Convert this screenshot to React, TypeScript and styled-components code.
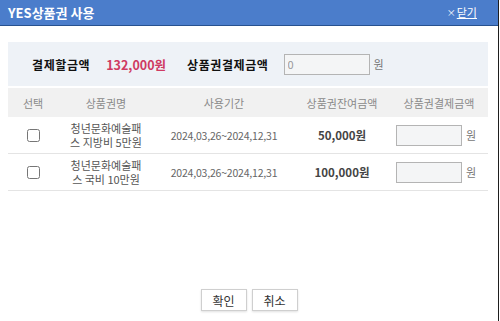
import React from "react";
import styled, { createGlobalStyle } from "styled-components";

const GlobalStyle = createGlobalStyle`
  html, body {
    margin: 0;
    padding: 0;
    background: #ffffff;
  }
  body {
    font-family: "Noto Sans CJK KR", "Noto Sans", sans-serif;
  }
`;

type Voucher = {
  id: number;
  name: string;
  period: string;
  balance: string;
};

const vouchers: Voucher[] = [
  { id: 1, name: "청년문화예술패스 지방비 5만원", period: "2024,03,26~2024,12,31", balance: "50,000원" },
  { id: 2, name: "청년문화예술패스 국비 10만원", period: "2024,03,26~2024,12,31", balance: "100,000원" },
];

const Dialog = styled.div`
  width: 499px;
  height: 321px;
  box-sizing: border-box;
  border-right: 1px solid #1e1e1e;
  display: flex;
  flex-direction: column;
  background: #ffffff;
`;

const TitleBar = styled.div`
  height: 26px;
  box-sizing: border-box;
  background: #4b7dcb;
  border-bottom: 1px solid #27518f;
  display: flex;
  align-items: center;
  justify-content: space-between;
  padding: 0 21px 1px 8px;
`;

const Title = styled.h1`
  margin: 0;
  font-size: 13px;
  font-weight: 700;
  color: #ffffff;
`;

const CloseLink = styled.a`
  font-size: 11px;
  color: #ffffff;
  cursor: pointer;
  display: flex;
  align-items: center;

  i {
    font-style: normal;
    font-size: 9px;
    margin-right: 1px;
  }

  span {
    text-decoration: underline;
  }
`;

const Body = styled.div`
  flex: 1;
  padding: 16px 10px 0 8px;
`;

const Summary = styled.div`
  height: 44px;
  background: #eef2f7;
  display: flex;
  align-items: center;
  padding-left: 24px;
  font-size: 12px;
  color: #111;
`;

const SummaryLabel = styled.span<{ gap: number }>`
  font-weight: 700;
  letter-spacing: 0.6px;
  margin-right: ${(p) => p.gap}px;
`;

const Price = styled.span`
  font-weight: 700;
  color: #cf3a62;
  margin-right: 21px;
  font-size: 12.5px;
`;

const AmountInput = styled.input<{ w: number; h: number }>`
  width: ${(p) => p.w}px;
  height: ${(p) => p.h}px;
  box-sizing: border-box;
  border: 1px solid #b4b4b4;
  background: #f4f5f6;
  padding: 0 3px;
  font-size: 11px;
  color: #999;
  font-family: inherit;
`;

const Won = styled.span`
  font-size: 11px;
  color: #777;
  margin-left: 4px;
`;

const Row = styled.div<{ head?: boolean }>`
  display: grid;
  grid-template-columns: 50px 96px 140px 96px 98px;
  align-items: center;
  height: ${(p) => (p.head ? "29px" : "36px")};
  margin-top: ${(p) => (p.head ? "2px" : "0")};
  background: ${(p) => (p.head ? "#f1f1f1" : "#ffffff")};
  border-bottom: ${(p) => (p.head ? "none" : "1px solid #e4e4e4")};
  color: ${(p) => (p.head ? "#8a8a8a" : "#555")};
  font-size: 11px;
`;

const Cell = styled.div<{ pr?: number }>`
  display: flex;
  justify-content: center;
  align-items: center;
  text-align: center;
  padding-right: ${(p) => p.pr ?? 0}px;
`;

const Check = styled.input`
  width: 13px;
  height: 13px;
  margin: 0;
`;

const Name = styled.div`
  width: 80px;
  line-height: 14px;
  word-break: break-all;
  font-size: 11px;
  color: #555;
`;

const Period = styled.span`
  font-size: 10.5px;
  color: #666;
  letter-spacing: -0.2px;
`;

const Balance = styled.span`
  font-weight: 700;
  font-size: 11.5px;
  color: #444;
`;

const Footer = styled.div`
  display: flex;
  justify-content: center;
  gap: 5px;
  padding-bottom: 10px;
`;

const Button = styled.button`
  width: 46px;
  height: 22px;
  border: 1px solid #cfcfcf;
  background: #ffffff;
  box-shadow: 0 1px 2px rgba(0, 0, 0, 0.12);
  font-family: inherit;
  font-size: 12px;
  color: #333;
  padding: 0;
  cursor: pointer;
`;

export default function App() {
  return (
    <>
      <GlobalStyle />
      <Dialog>
        <TitleBar>
          <Title>YES상품권 사용</Title>
          <CloseLink>
            <i>×</i>
            <span>닫기</span>
          </CloseLink>
        </TitleBar>
        <Body>
          <Summary>
            <SummaryLabel gap={16}>결제할금액</SummaryLabel>
            <Price>132,000원</Price>
            <SummaryLabel gap={15}>상품권결제금액</SummaryLabel>
            <AmountInput w={86} h={21} defaultValue="0" readOnly />
            <Won>원</Won>
          </Summary>
          <Row head>
            <Cell>선택</Cell>
            <Cell>상품권명</Cell>
            <Cell>사용기간</Cell>
            <Cell>상품권잔여금액</Cell>
            <Cell>상품권결제금액</Cell>
          </Row>
          {vouchers.map((v) => (
            <Row key={v.id}>
              <Cell>
                <Check type="checkbox" />
              </Cell>
              <Cell>
                <Name>{v.name}</Name>
              </Cell>
              <Cell>
                <Period>{v.period}</Period>
              </Cell>
              <Cell>
                <Balance>{v.balance}</Balance>
              </Cell>
              <Cell pr={6}>
                <AmountInput w={66} h={21} />
                <Won>원</Won>
              </Cell>
            </Row>
          ))}
        </Body>
        <Footer>
          <Button>확인</Button>
          <Button>취소</Button>
        </Footer>
      </Dialog>
    </>
  );
}
